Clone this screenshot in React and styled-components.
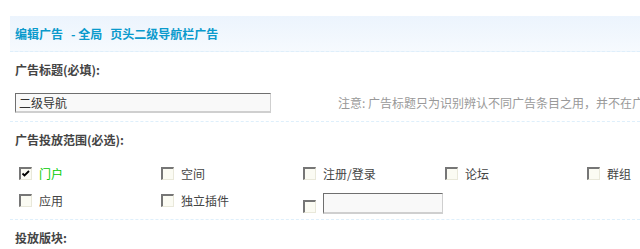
import React from "react"
import styled, { createGlobalStyle } from "styled-components"

const GlobalStyle = createGlobalStyle`
    html, body {
        margin: 0;
        padding: 0;
        background: #fff;
        overflow: hidden;
    }
    body {
        font-family: "Noto Sans CJK SC", "Noto Sans", sans-serif;
        font-size: 12px;
        color: #333;
    }
`

const Page = styled.div`
    padding: 16px 0 0 10px;
    width: 640px;
    box-sizing: border-box;
`

const Header = styled.div`
    height: 35px;
    padding-left: 5px;
    display: flex;
    align-items: center;
    background: linear-gradient(#ecf4fd, #f6fafe);
    border-bottom: 1px dashed #deeffb;
    color: #0a9acc;
    font-weight: bold;
    white-space: nowrap;
`

const Gap = styled.span`
    display: inline-block;
    width: ${props => props.w}px;
`

const LabelRow = styled.div`
    height: 34px;
    padding-left: 5px;
    display: flex;
    align-items: center;
    font-weight: bold;
    color: #444;
`

const FieldRow = styled.div`
    height: 36px;
    padding: 7px 0 0 5px;
    box-sizing: border-box;
    display: flex;
    align-items: flex-start;
    border-bottom: 1px dashed #deeffb;
    white-space: nowrap;
    overflow: hidden;
`

const TextInput = styled.div`
    width: ${props => props.w}px;
    height: ${props => props.h}px;
    box-sizing: border-box;
    padding-left: 3px;
    flex-shrink: 0;
    display: flex;
    align-items: center;
    background: #f9f9f9;
    border-style: solid;
    border-width: 1px 1px 2px 1px;
    border-color: #6f6f6f #cfcfcf #cfcfcf #6f6f6f;
    color: #333;
`

const Tip = styled.span`
    margin-left: 67px;
    line-height: 20px;
    color: #999;
`

const CheckArea = styled.div`
    height: 64px;
    padding: 4px 0 0 9px;
    box-sizing: border-box;
    display: grid;
    grid-template-columns: repeat(5, 142px);
    grid-template-rows: 26px 28px;
    border-bottom: 1px dashed #deeffb;
`

const CheckItem = styled.label`
    display: flex;
    align-items: ${props => props.bottom ? "flex-end" : "center"};
    padding-top: ${props => props.bottom ? 6 : 0}px;
    box-sizing: border-box;
    color: ${props => props.checked ? "#00cc00" : "#444"};
    white-space: nowrap;
`

const Box = styled.span`
    width: 13px;
    height: 13px;
    box-sizing: border-box;
    margin-right: 7px;
    margin-bottom: ${props => props.bottom ? 1 : 0}px;
    flex-shrink: 0;
    position: relative;
    background: #fbfbf3;
    border-style: solid;
    border-width: 2px 1px 1px 2px;
    border-color: #767676 #e9e8da #e9e8da #767676;

    & > svg {
        position: absolute;
        left: 0;
        top: 0;
    }
`

function CheckBox({ checked, bottom }) {
    return (
        <Box bottom={bottom}>
            {checked && (
                <svg width="10" height="10" viewBox="0 0 10 10">
                    <path d="M1.5 4.5 L3.5 6.5 L8 2" stroke="#000" strokeWidth="1.8" fill="none" />
                </svg>
            )}
        </Box>
    )
}

const areas = [
    { name: "门户", checked: true },
    { name: "空间" },
    { name: "注册/登录" },
    { name: "论坛" },
    { name: "群组" },
    { name: "应用" },
    { name: "独立插件" }
]

export default function App() {
    return (
        <>
            <GlobalStyle />
            <Page>
                <Header>
                    编辑广告<Gap w={8} />- 全局<Gap w={8} />页头二级导航栏广告
                </Header>
                <LabelRow>广告标题(必填):</LabelRow>
                <FieldRow>
                    <TextInput w={256} h={20}>二级导航</TextInput>
                    <Tip>注意: 广告标题只为识别辨认不同广告条目之用，并不在广告中显示</Tip>
                </FieldRow>
                <LabelRow>广告投放范围(必选):</LabelRow>
                <CheckArea>
                    {areas.map(a => (
                        <CheckItem key={a.name} checked={a.checked}>
                            <CheckBox checked={a.checked} />
                            {a.name}
                        </CheckItem>
                    ))}
                    <CheckItem bottom>
                        <CheckBox bottom />
                        <TextInput w={120} h={21} />
                    </CheckItem>
                </CheckArea>
                <LabelRow>投放版块:</LabelRow>
            </Page>
        </>
    )
}
